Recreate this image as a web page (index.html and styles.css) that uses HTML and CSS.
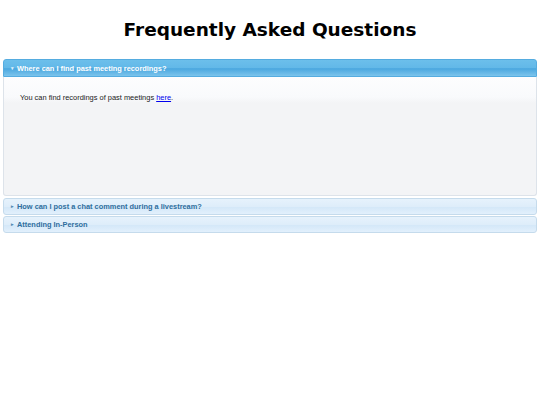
FILE: index.html
```html
<!DOCTYPE html>
<html>
<head>
<meta charset="utf-8">
<link rel="stylesheet" href="styles.css">
</head>
<body>
<h1 class="title">Frequently Asked Questions</h1>
<div class="accordion">
  <div class="header active"><span class="arrow">&#9662;</span>Where can I find past meeting recordings?</div>
  <div class="panel">
    <p>You can find recordings of past meetings <a href="#">here</a>.</p>
  </div>
  <div class="header"><span class="arrow">&#9656;</span>How can I post a chat comment during a livestream?</div>
  <div class="header"><span class="arrow">&#9656;</span>Attending In-Person</div>
</div>
</body>
</html>
```
FILE: styles.css
```css
html, body { margin: 0; padding: 0; background: #fff; }
body { padding: 0 3px; }
.title {
  font-family: "DejaVu Sans", Verdana, sans-serif;
  font-weight: bold;
  font-size: 18.5px;
  text-align: center;
  margin: 0;
  padding-top: 18px;
  height: 59px;
  box-sizing: border-box;
  line-height: 24px;
  color: #000;
}
.accordion { display: flex; flex-direction: column; font-family: "Liberation Sans", Arial, sans-serif; }
.header {
  height: 17px;
  line-height: 16px;
  box-sizing: border-box;
  font-size: 7.4px;
  font-weight: bold;
  color: #2e6e9e;
  padding-left: 7px;
  border: 1px solid #c5dbec;
  border-radius: 3px;
  background: linear-gradient(to bottom, #e6f2fc 0%, #deedfa 50%, #d3e7f8 52%, #e2f0fc 100%);
  margin-top: 1px;
}
.header.active {
  height: 18px;
  line-height: 17px;
  margin-top: 0;
  color: #fff;
  border-color: #55ace0;
  border-radius: 3px 3px 0 0;
  background: linear-gradient(to bottom, #6cbfeb 0%, #62b8e8 50%, #4aa7df 54%, #7cc4ec 100%);
}
.arrow { font-size: 4.5px; margin-right: 3px; vertical-align: 1px; opacity: 0.8; }
.panel {
  height: 119px;
  box-sizing: border-box;
  border: 1px solid #dde3ea;
  border-top: none;
  border-radius: 0 0 3px 3px;
  background: linear-gradient(to bottom, #fdfdfe 0px, #f9fafc 20px, #f3f4f6 26px, #f3f4f6 100%);
  padding: 16px 16px;
  margin-bottom: 1px;
}
.panel p { margin: 0; font-size: 7.45px; color: #222; }
.panel a { color: #0000ee; text-decoration: underline; }
```
